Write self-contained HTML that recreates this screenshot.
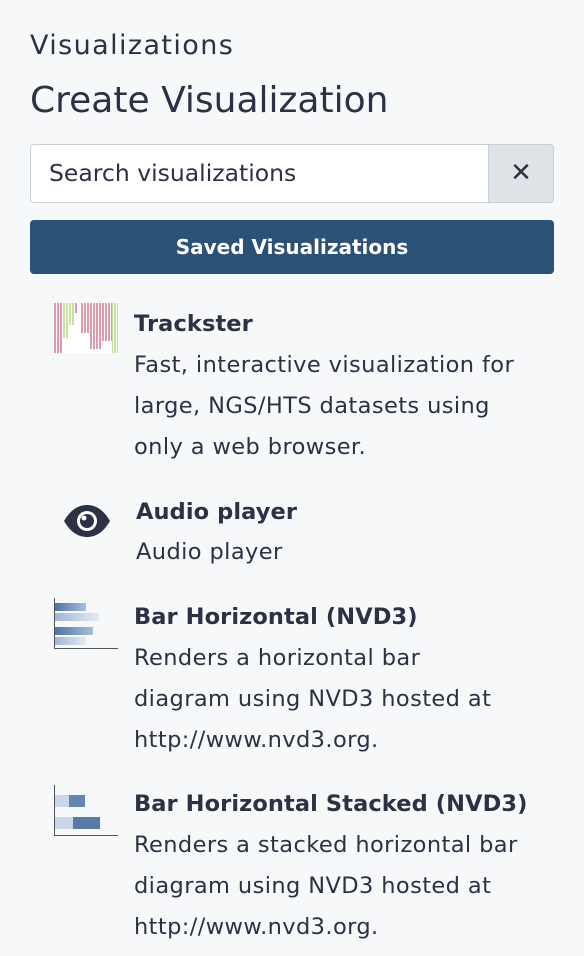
<!DOCTYPE html><html><head><style>
body{margin:0;width:584px;height:956px;background:#f7f8fa;font-family:"DejaVu Sans","Liberation Sans",sans-serif;color:#2c3143;overflow:hidden;position:relative}
.a{position:absolute;white-space:nowrap}
.t{font-weight:bold;font-size:22.5px;letter-spacing:0.1px}
.d{font-size:22.5px;letter-spacing:0.4px}
</style></head><body>
<div class="a" style="left:30px;top:30px;font-size:27px;letter-spacing:1.4px">Visualizations</div>
<div class="a" style="left:30px;top:80px;font-size:36px">Create Visualization</div>
<div class="a" style="left:30px;top:144px;width:457px;height:57px;background:#fff;border:1px solid #c8ced6;border-radius:4px 0 0 4px"></div>
<div class="a" style="left:49px;top:159px;font-size:23.5px;color:#2c3143">Search visualizations</div>
<div class="a" style="left:488px;top:144px;width:64px;height:57px;background:#dfe3e8;border:1px solid #c8ced6;border-radius:0 4px 4px 0;text-align:center;line-height:57px;font-size:26px;font-weight:bold">✕</div>
<div class="a" style="left:30px;top:220px;width:524px;height:54px;background:#2c5177;border-radius:4px;color:#fff;font-weight:bold;font-size:20px;text-align:center;line-height:54px">Saved Visualizations</div>

<svg class="a" style="left:54px;top:303px" width="64" height="50">
<defs><pattern id="p" width="3" height="50" patternUnits="userSpaceOnUse"><rect width="2" height="50" fill="#e09aae"/></pattern>
<pattern id="q" width="3" height="50" patternUnits="userSpaceOnUse"><rect width="2" height="50" fill="#c8e0a0"/></pattern></defs>
<rect width="64" height="50" fill="#fff"/>
<rect x="0" y="0" width="8" height="50" fill="url(#p)"/>
<rect x="8" y="0" width="6" height="35" fill="url(#q)"/>
<rect x="14" y="0" width="6" height="22" fill="url(#q)"/>
<rect x="20" y="0" width="4" height="10" fill="url(#p)"/>
<rect x="27" y="0" width="9" height="30" fill="url(#p)"/>
<rect x="36" y="0" width="12" height="46" fill="url(#p)"/>
<rect x="48" y="0" width="10" height="38" fill="url(#p)"/>
<rect x="58" y="0" width="6" height="50" fill="url(#q)"/>
</svg>
<div class="a t" style="left:134px;top:311px">Trackster</div>
<div class="a d" style="left:134px;top:345px;line-height:41px">Fast, interactive visualization for<br>large, NGS/HTS datasets using<br>only a web browser.</div>

<svg class="a" style="left:63px;top:504px" width="48" height="34" viewBox="0 0 48 34">
<path d="M1 17C8 5 16 1 24 1S40 5 47 17C40 29 32 33 24 33S8 29 1 17Z" fill="#2c3143"/>
<circle cx="24" cy="17" r="10" fill="#fff"/><circle cx="24" cy="17" r="7" fill="#2c3143"/><circle cx="21" cy="14" r="2.5" fill="#fff"/>
</svg>
<div class="a t" style="left:136px;top:499px">Audio player</div>
<div class="a d" style="left:136px;top:539px">Audio player</div>

<svg class="a" style="left:54px;top:598px" width="64" height="52">
<defs><linearGradient id="g" x1="0" x2="1"><stop offset="0" stop-color="#4f73a3"/><stop offset="1" stop-color="#a9bfdc"/></linearGradient>
<linearGradient id="h" x1="0" x2="1"><stop offset="0" stop-color="#9fb6d6"/><stop offset="1" stop-color="#e4ebf5"/></linearGradient></defs>
<rect x="1" y="5" width="31" height="8" fill="url(#g)"/><rect x="1" y="15" width="44" height="8" fill="url(#h)"/><rect x="1" y="29" width="38" height="8" fill="url(#g)"/><rect x="1" y="39" width="31" height="8" fill="url(#h)"/>
<path d="M0.5 0V50.5H64" stroke="#555" fill="none"/>
</svg>
<div class="a t" style="left:134px;top:604px">Bar Horizontal (NVD3)</div>
<div class="a d" style="left:134px;top:638px;line-height:41px">Renders a horizontal bar<br>diagram using NVD3 hosted at<br>http://www.nvd3.org.</div>

<svg class="a" style="left:54px;top:785px" width="64" height="52">
<rect x="1" y="10" width="14" height="12" fill="#c8d6e8"/><rect x="15" y="10" width="16" height="12" fill="#6585af"/>
<rect x="1" y="32" width="18" height="12" fill="#c8d6e8"/><rect x="19" y="32" width="27" height="12" fill="#5a7aa6"/>
<path d="M0.5 0V50.5H64" stroke="#555" fill="none"/>
</svg>
<div class="a t" style="left:134px;top:791px">Bar Horizontal Stacked (NVD3)</div>
<div class="a d" style="left:134px;top:825px;line-height:41px">Renders a stacked horizontal bar<br>diagram using NVD3 hosted at<br>http://www.nvd3.org.</div>
</body></html>
